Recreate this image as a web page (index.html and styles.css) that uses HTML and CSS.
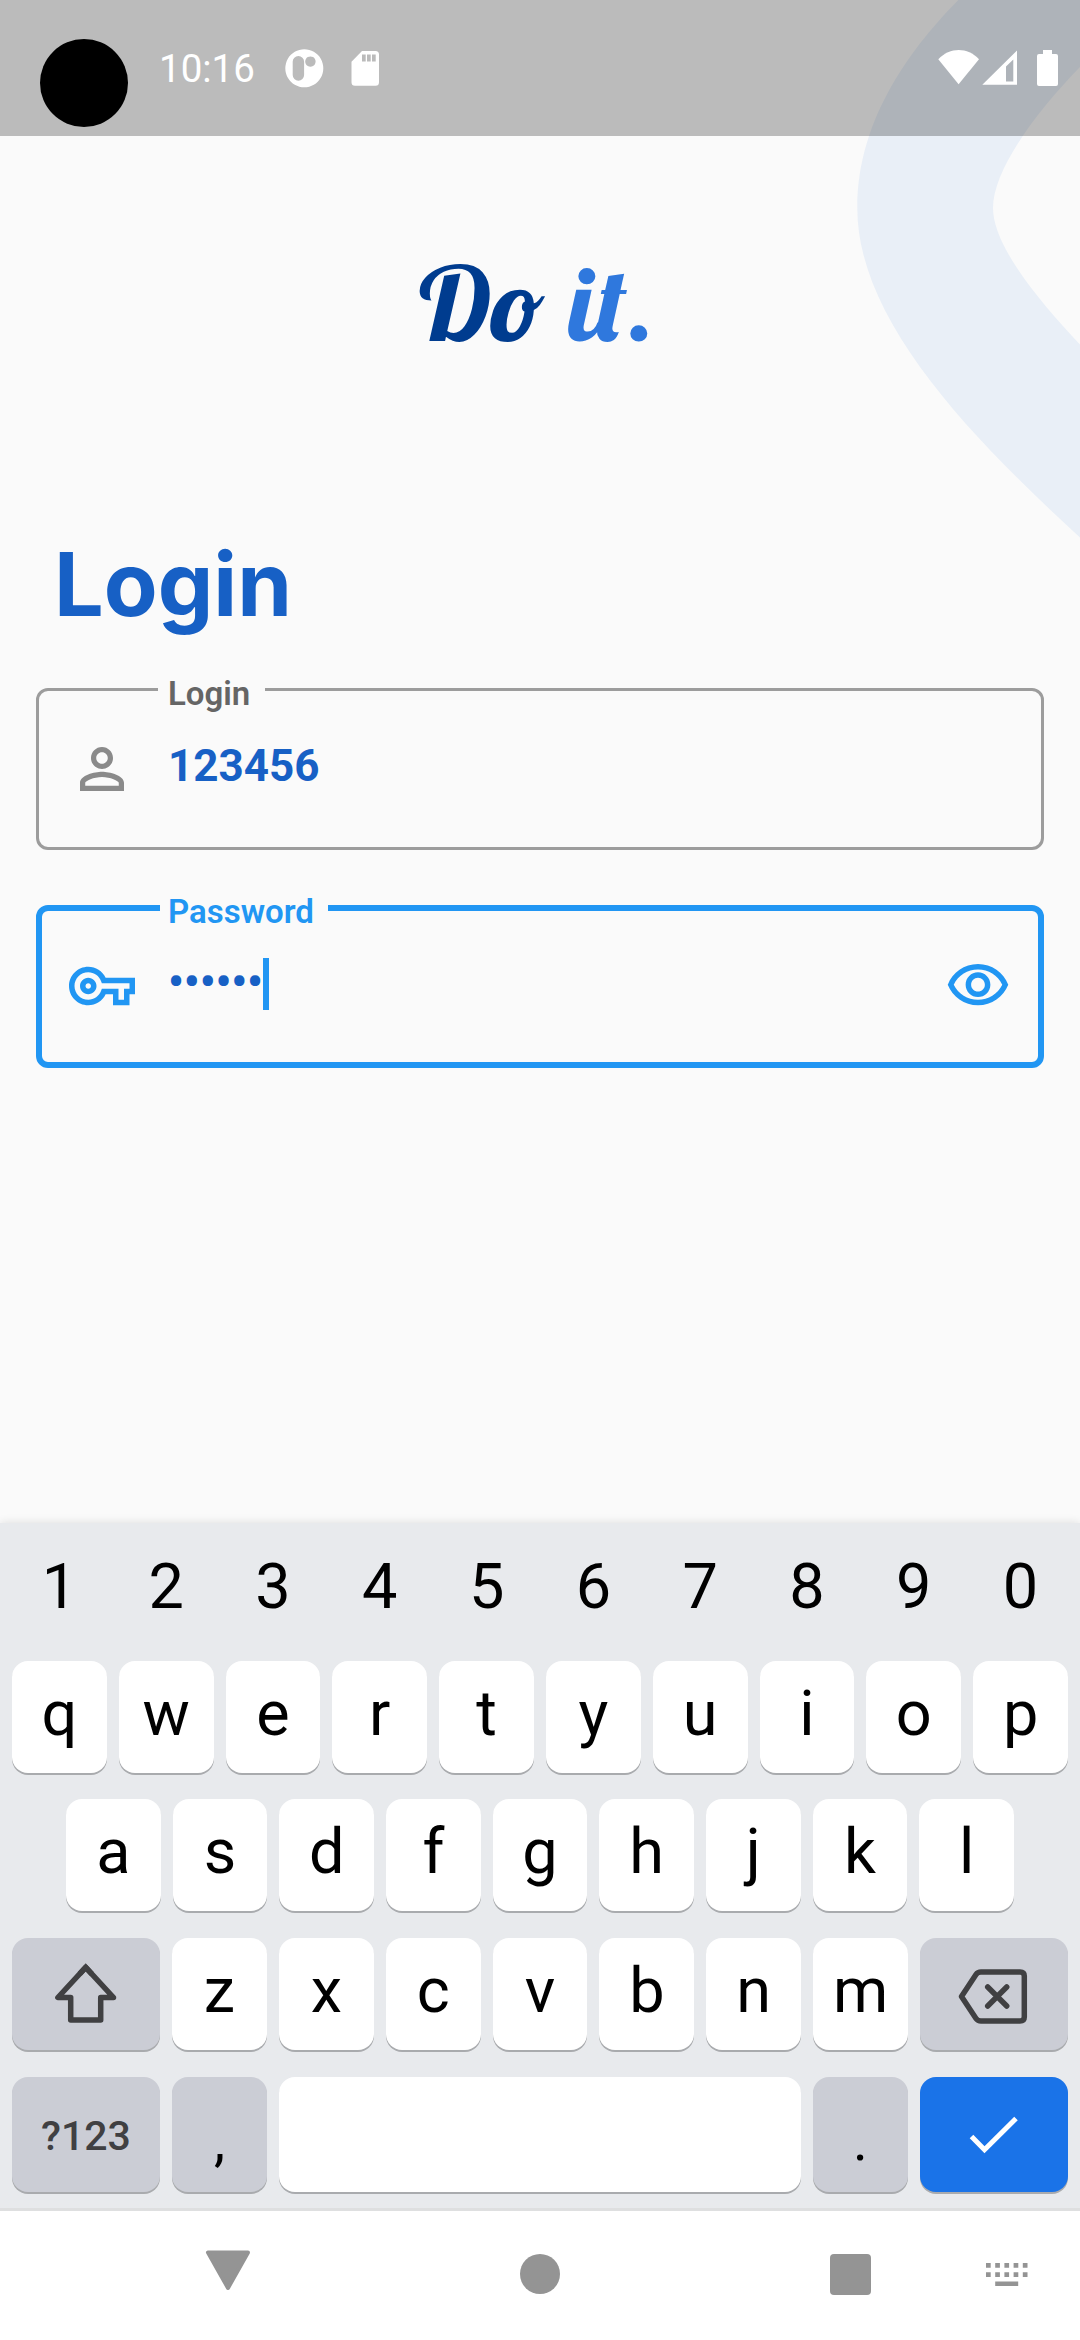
FILE: index.html
```html
<!DOCTYPE html>
<html lang="en">
<head>
<meta charset="utf-8">
<title>Do it. – Login</title>
<link rel="stylesheet" href="styles.css">
</head>
<body>
<div class="screen">
  <svg class="backdrop" viewBox="0 0 240 560" aria-hidden="true">
    <path d="M118.300 0C75 44 17.300 116 17.300 208C17.300 318 125 432 240 537.500V344.600C202 304 153 247 153 208C153 167 202 106 240 67V0Z"/>
  </svg>

  <header class="status">
    <div class="camera"></div>
    <time class="clock">10:16</time>
    <svg class="notices" width="100" height="40" viewBox="284 48 100 40">
      <path fill-rule="evenodd" d="M304.300 49.300a19 19 0 1 0 .01 0zM298.400 56a5.700 5.700 0 0 1 5.700 5.700v13.300a5.700 5.700 0 0 1-11.400 0v-13.300a5.700 5.700 0 0 1 5.700-5.700zM310.400 56.400a5.200 5.200 0 1 0 .01 0z"/>
      <path fill-rule="evenodd" d="M362 51h13.500a3.500 3.500 0 0 1 3.500 3.500v27.700a3.500 3.500 0 0 1-3.500 3.500h-20.500a3.500 3.500 0 0 1-3.500-3.500v-20.500zM362 54.500v7h3.700v-7zM367 54.500v7h3.700v-7zM372 54.500v7h3.700v-7z"/>
    </svg>
    <svg class="signals" width="122" height="40" viewBox="937 48 122 40">
      <path d="M938.300 59.300C950 47 967.500 47 979 59.300L958.600 84.300Z"/>
      <path fill-rule="evenodd" d="M1017 50.500V84.700H982.300ZM1013.300 59.500L1006 66.500V81.500H1013.300Z"/>
      <path d="M1043 50h9v4h4a2 2 0 0 1 2 2v28a2 2 0 0 1-2 2h-17a2 2 0 0 1-2-2v-28a2 2 0 0 1 2-2h4z"/>
    </svg>
  </header>

  <main class="login">
    <svg class="logo" width="260" height="110" viewBox="410 250 260 110" role="img">
      <text class="logo-do" x="419" y="341" textLength="126" lengthAdjust="spacingAndGlyphs">Do</text>
      <text class="logo-it" x="569" y="341" textLength="86" lengthAdjust="spacingAndGlyphs">it.</text>
    </svg>
    <h1 class="title">Login</h1>

    <div class="field">
      <label class="label">Login</label>
      <svg class="icon" viewBox="0 0 24 24"><path d="M12 5.900c1.160 0 2.100.94 2.100 2.100s-.94 2.100-2.100 2.100S9.900 9.160 9.900 8s.94-2.100 2.100-2.100m0 9c2.970 0 6.100 1.460 6.100 2.100v1.100H5.900V17c0-.64 3.130-2.100 6.100-2.100M12 4C9.790 4 8 5.790 8 8s1.790 4 4 4 4-1.790 4-4-1.790-4-4-4zm0 9c-2.670 0-8 1.340-8 4v3h16v-3c0-2.660-5.330-4-8-4z"/></svg>
      <span class="value">123456</span>
    </div>

    <div class="field focused">
      <label class="label">Password</label>
      <svg class="icon" viewBox="0 0 24 24"><path d="M22 19h-6v-4h-2.680c-1.140 2.420-3.600 4-6.320 4-3.860 0-7-3.140-7-7s3.140-7 7-7c2.720 0 5.170 1.580 6.320 4H24v6h-2v4zm-4-2h2v-4h2v-2H11.940l-.23-.67C11.010 8.340 9.110 7 7 7c-2.760 0-5 2.240-5 5s2.240 5 5 5c2.110 0 4.010-1.340 4.710-3.330l.23-.67H18v4zM7 15c-1.650 0-3-1.350-3-3s1.350-3 3-3 3 1.350 3 3-1.350 3-3 3zm0-4c-.55 0-1 .45-1 1s.45 1 1 1 1-.45 1-1-.45-1-1-1z"/></svg>
      <span class="value">••••••</span>
      <span class="caret"></span>
      <svg class="icon reveal" viewBox="0 0 24 24"><path d="M12 6c3.790 0 7.170 2.130 8.820 5.500C19.170 14.870 15.790 17 12 17s-7.170-2.130-8.820-5.500C4.830 8.130 8.210 6 12 6m0-2C7 4 2.730 7.110 1 11.500 2.730 15.890 7 19 12 19s9.270-3.110 11-7.500C21.270 7.110 17 4 12 4zm0 5c1.380 0 2.500 1.120 2.500 2.500S13.380 14 12 14s-2.500-1.120-2.500-2.500S10.620 9 12 9m0-2c-2.480 0-4.500 2.020-4.500 4.500S9.520 16 12 16s4.500-2.020 4.500-4.500S14.480 7 12 7z"/></svg>
    </div>
  </main>

  <section class="keyboard">
    <div class="row digits"><span>1</span><span>2</span><span>3</span><span>4</span><span>5</span><span>6</span><span>7</span><span>8</span><span>9</span><span>0</span></div>
    <div class="row top"><span class="key">q</span><span class="key">w</span><span class="key">e</span><span class="key">r</span><span class="key">t</span><span class="key">y</span><span class="key">u</span><span class="key">i</span><span class="key">o</span><span class="key">p</span></div>
    <div class="row home"><span class="key">a</span><span class="key">s</span><span class="key">d</span><span class="key">f</span><span class="key">g</span><span class="key">h</span><span class="key">j</span><span class="key">k</span><span class="key">l</span></div>
    <div class="row lower">
      <span class="key fn wide"><svg width="148" height="112" viewBox="12 1938 148 112"><path d="M85.700 1967.300L57.900 1997.500H70.700V2020H100.700V1997.500H113.500Z"/><path class="miter" d="M79.700 1973.800L85.700 1967.300L91.700 1973.800"/></svg></span>
      <span class="key">z</span><span class="key">x</span><span class="key">c</span><span class="key">v</span><span class="key">b</span><span class="key">n</span><span class="key">m</span>
      <span class="key fn wide"><svg width="148" height="112" viewBox="920 1938 148 112"><path d="M961.500 1996.500L976 1974.500Q977.700 1972 981 1972H1020Q1024.300 1972 1024.300 1976V2017Q1024.300 2021 1020 2021H981Q977.700 2021 976 2018.500ZM987.700 1987L1006.700 2006M1006.700 1987L987.700 2006"/></svg></span>
    </div>
    <div class="row bottom">
      <span class="key fn wide symbols">?123</span>
      <span class="key fn punct">,</span>
      <span class="key space"></span>
      <span class="key fn punct">.</span>
      <span class="key enter wide"><svg width="148" height="115" viewBox="920 2077 148 115"><path class="miter" d="M971.500 2136.500L984.500 2149.700L1016 2118.500"/></svg></span>
    </div>
  </section>

  <nav class="navbar">
    <svg class="nav-back" width="46" height="42" viewBox="0 0 46 42"><path d="M3 2.500H43L23 38Z"/></svg>
    <span class="nav-home"></span>
    <span class="nav-recent"></span>
    <svg class="nav-ime" width="42" height="24" viewBox="0 0 42 24"><path d="M0 0h4.700v4.700H0zM9.200 0h4.700v4.700H9.200zM18.400 0h4.700v4.700h-4.700zM27.600 0h4.700v4.700h-4.700zM36.800 0h4.700v4.700h-4.700zM0 9.200h4.700v4.700H0zM9.200 9.200h4.700v4.700H9.200zM18.400 9.200h4.700v4.700h-4.700zM27.600 9.200h4.700v4.700h-4.700zM36.800 9.200h4.700v4.700h-4.700zM9.200 18.400h23v4.700h-23z"/></svg>
  </nav>
</div>
</body>
</html>
```

FILE: styles.css
```css
* { box-sizing: border-box; }

body {
  margin: 0;
  background: #fafafa;
  font-family: Roboto, "Liberation Sans", sans-serif;
}

.screen {
  position: relative;
  display: flex;
  flex-direction: column;
  width: 1080px;
  height: 2340px;
  overflow: hidden;
}

.backdrop {
  position: absolute;
  top: 0;
  right: 0;
  width: 240px;
  height: 560px;
  fill: #e9eff7;
}

/* Status bar */
.status {
  position: relative;
  display: flex;
  align-items: flex-start;
  height: 136px;
  padding-left: 40px;
  padding-right: 21px;
  background: rgba(0, 0, 0, 0.25);
  color: #fff;
}
.status svg { margin-top: 48px; fill: #fff; }
.camera {
  width: 88px;
  height: 88px;
  margin-top: 39px;
  border-radius: 50%;
  background: #000;
}
.clock {
  width: 125px;
  margin-top: 45px;
  margin-left: 31px;
  font-size: 38.5px;
  line-height: 48px;
}
.signals { margin-left: auto; }

/* Login form */
.login {
  position: relative;
  display: flex;
  flex-direction: column;
  flex: 1;
  padding: 114px 36px 0;
}
.logo { margin-left: 374px; overflow: visible; }
.logo text {
  font: 102px Lobster, "Liberation Serif", serif;
}
.logo-do { fill: #003c8f; }
.logo-it { fill: #2f78dd; }

.title {
  margin: 174px 0 54px 18px;
  font: bold 88px/100px Inter, sans-serif;
  color: #1760c5;
}

.field {
  position: relative;
  display: flex;
  align-items: center;
  height: 162px;
  margin-bottom: 55px;
  padding: 0 30px;
  border: 3px solid #9c9c9c;
  border-radius: 12px;
  color: #656565;
}
.field.focused {
  height: 163px;
  padding: 0 27px;
  border: 6px solid #2196f3;
  color: #2196f3;
}
.label {
  position: absolute;
  top: -19px;
  left: 119px;
  width: 107px;
  padding-left: 10px;
  background: #fafafa;
  font-size: 33px;
  font-weight: 600;
  line-height: 44px;
}
.focused .label { top: -21px; left: 118px; width: 168px; padding-left: 8px; }
.icon { flex: none; width: 66px; height: 66px; fill: #8a8a8a; }
.focused .icon { margin-top: -1px; fill: #2196f3; }
.value {
  margin: -6px 0 0 33px;
  font-size: 44px;
  font-weight: bold;
  line-height: 52px;
  color: #1760c5;
}
.focused .value { margin-top: -9px; }
.caret {
  width: 6px;
  height: 52px;
  margin-top: -5px;
  background: #2196f3;
}
.focused .reveal { margin-top: -2px; margin-left: auto; }

/* On-screen keyboard */
.keyboard {
  position: relative;
  height: 685px;
  background: #e8eaed;
  box-shadow: 0 0 9px rgba(0, 0, 0, 0.12);
  color: #000;
  font-size: 63px;
  line-height: 105px;
  text-align: center;
}
.row { display: flex; gap: 12px; padding: 0 12px; }
.digits { height: 138px; line-height: 128px; }
.digits span { flex: 1 1 0; }
.top { height: 138px; }
.home { height: 139px; padding: 0 66px; }
.lower { height: 139px; }

.key {
  flex: 1 1 0;
  height: 112px;
  border-radius: 16px;
  background: #fff;
  box-shadow: 0 2px 0 #a9abae;
}
.bottom .key { height: 115px; }
.fn { background: #cbcdd5; }
.key.wide { flex: 0 0 148px; }
.key.space { flex: 0 0 522px; }
.enter { background: #1a73e8; }
.symbols {
  color: #404042;
  font-size: 41px;
  font-weight: 500;
  line-height: 118px;
}
.punct { font-size: 56px; line-height: 128px; }
.key svg {
  display: block;
  fill: none;
  stroke: #404042;
  stroke-width: 5.5;
  stroke-linejoin: round;
  stroke-linecap: round;
}
.key svg .miter { stroke-linejoin: miter; stroke-linecap: butt; }
.enter svg { stroke: #fff; stroke-width: 5; }

/* System navigation */
.navbar {
  position: relative;
  display: flex;
  align-items: flex-start;
  height: 132px;
  padding-left: 205px;
  border-top: 3px solid #dedfe0;
  background: #fff;
}
.navbar svg { fill: #949494; }
.nav-back {
  margin-top: 39px;
  stroke: #949494;
  stroke-width: 4;
  stroke-linejoin: round;
}
.nav-home {
  width: 40px;
  height: 40px;
  margin: 43px 0 0 269px;
  border-radius: 50%;
  background: #949494;
}
.nav-recent {
  width: 41px;
  height: 41px;
  margin: 43px 0 0 270px;
  border-radius: 4px;
  background: #949494;
}
.nav-ime { margin: 52px 0 0 115px; }
```
